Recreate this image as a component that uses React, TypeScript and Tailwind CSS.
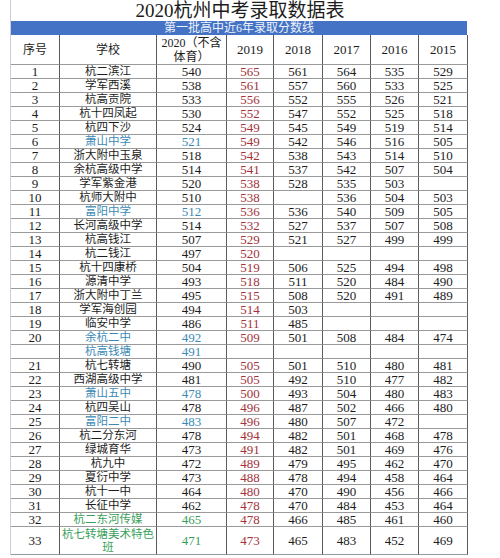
import React from 'react';

type Tone = 'k' | 'b' | 'g';

interface Row {
  no: string;
  school: string;
  s2020: string;
  s2019: string;
  s2018: string;
  s2017: string;
  s2016: string;
  s2015: string;
  tone?: Tone;
  tall?: boolean;
}

const raw: [string, string, string, string, string, string, string, string, Tone?][] = [
  ['1', '杭二滨江', '540', '565', '561', '564', '535', '529'],
  ['2', '学军西溪', '538', '561', '557', '560', '533', '525'],
  ['3', '杭高贡院', '533', '556', '552', '555', '526', '521'],
  ['4', '杭十四凤起', '530', '552', '547', '552', '525', '518'],
  ['5', '杭四下沙', '524', '549', '545', '549', '519', '514'],
  ['6', '萧山中学', '521', '549', '542', '546', '516', '505', 'b'],
  ['7', '浙大附中玉泉', '518', '542', '538', '543', '514', '510'],
  ['8', '余杭高级中学', '514', '541', '537', '542', '507', '504'],
  ['9', '学军紫金港', '520', '538', '528', '535', '503', ''],
  ['10', '杭师大附中', '510', '538', '', '536', '504', '503'],
  ['11', '富阳中学', '512', '536', '536', '540', '509', '505', 'b'],
  ['12', '长河高级中学', '514', '532', '527', '537', '507', '508'],
  ['13', '杭高钱江', '507', '529', '521', '527', '499', '499'],
  ['14', '杭二钱江', '497', '520', '', '', '', ''],
  ['15', '杭十四康桥', '504', '519', '506', '525', '494', '498'],
  ['16', '源清中学', '493', '518', '511', '520', '484', '490'],
  ['17', '浙大附中丁兰', '495', '515', '508', '520', '491', '489'],
  ['18', '学军海创园', '494', '514', '503', '', '', ''],
  ['19', '临安中学', '486', '511', '485', '', '', ''],
  ['20', '余杭二中', '492', '509', '501', '508', '484', '474', 'b'],
  ['', '杭高钱塘', '491', '', '', '', '', '', 'b'],
  ['21', '杭七转塘', '490', '505', '501', '510', '480', '481'],
  ['22', '西湖高级中学', '481', '505', '492', '510', '477', '482'],
  ['23', '萧山五中', '478', '500', '493', '504', '480', '483', 'b'],
  ['24', '杭四吴山', '478', '496', '487', '502', '466', '480'],
  ['25', '富阳二中', '483', '496', '480', '507', '472', '', 'b'],
  ['26', '杭二分东河', '478', '494', '482', '501', '468', '478'],
  ['27', '绿城育华', '473', '491', '482', '501', '469', '476'],
  ['28', '杭九中', '472', '489', '479', '495', '462', '470'],
  ['29', '夏衍中学', '473', '488', '478', '494', '458', '464'],
  ['30', '杭十一中', '464', '480', '470', '490', '456', '466'],
  ['31', '长征中学', '462', '478', '470', '484', '453', '464'],
  ['32', '杭二东河传媒', '465', '478', '466', '485', '461', '460', 'g'],
  ['33', '杭七转塘美术特色班', '471', '473', '465', '483', '452', '469', 'g'],
];

const rows: Row[] = raw.map((r) => ({
  no: r[0],
  school: r[1],
  s2020: r[2],
  s2019: r[3],
  s2018: r[4],
  s2017: r[5],
  s2016: r[6],
  s2015: r[7],
  tone: r[8] ?? 'k',
  tall: r[1].length > 8,
}));

const toneClass: Record<Tone, string> = {
  k: 'text-[#1c1c1c]',
  b: 'text-[#3b8ab5]',
  g: 'text-[#3a9f5c]',
};

const cols = 'grid grid-cols-[49px_97px_70px_47px_49px_48px_48px_49px]';
const cell = 'flex items-center justify-center text-center border-r border-b border-r-[#5a5a5a] border-b-[#9a9a9a]';

export default function App() {
  return (
    <div className="w-[500px] h-[558px] overflow-hidden bg-white font-['Liberation_Serif','Noto_Sans_CJK_SC',serif] text-[#1c1c1c]">
      <div className="ml-[10px] w-[457px] border-l border-l-[#c8d0dc]">
        <div className="h-[21px] flex items-end justify-center text-[19px] leading-[21px] pl-[2px]">
          2020杭州中考录取数据表
        </div>
        <div className="h-[14px] bg-[#4472c4] text-[#eef3fb] text-[12px] leading-[14px] text-center">
          第一批高中近6年录取分数线
        </div>
        <div className={`${cols} h-[30px] text-[12px]`}>
          <div className={cell}>序号</div>
          <div className={cell}>学校</div>
          <div className={`${cell} leading-[14px]`}>
            2020（不含
            <br />
            体育）
          </div>
          <div className={`${cell} text-[13px]`}>2019</div>
          <div className={`${cell} text-[13px]`}>2018</div>
          <div className={`${cell} text-[13px]`}>2017</div>
          <div className={`${cell} text-[13px]`}>2016</div>
          <div className={`${cell} text-[13px]`}>2015</div>
        </div>
        {rows.map((r, i) => (
          <div key={i} className={`${cols} ${r.tall ? 'h-[28px]' : 'h-[14px]'} text-[13px] leading-[13px]`}>
            <div className={cell}>{r.no}</div>
            <div className={`${cell} text-[11.5px] leading-[13px] ${toneClass[r.tone ?? 'k']}`}>{r.school}</div>
            <div className={`${cell} ${toneClass[r.tone ?? 'k']}`}>{r.s2020}</div>
            <div className={`${cell} text-[#a3323b]`}>{r.s2019}</div>
            <div className={cell}>{r.s2018}</div>
            <div className={cell}>{r.s2017}</div>
            <div className={cell}>{r.s2016}</div>
            <div className={cell}>{r.s2015}</div>
          </div>
        ))}
      </div>
    </div>
  );
}
